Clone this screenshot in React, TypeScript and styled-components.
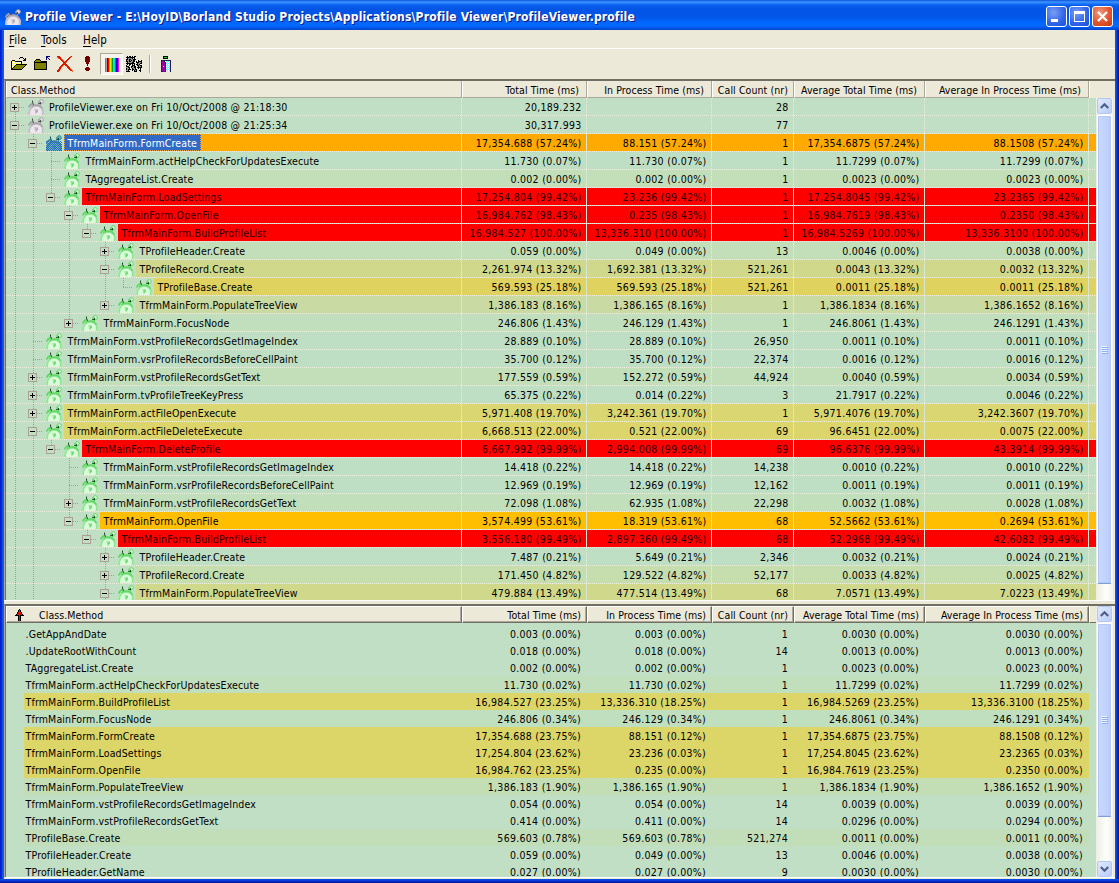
import React from "react";
import styled, { createGlobalStyle } from "styled-components";

const BASE = "#c0dfc4";
const FACE = "#ece9d8";
const COLS = [456, 125, 125, 82, 131, 164];

const Global = createGlobalStyle`
  html, body { margin: 0; padding: 0; background: #0a3fd0; overflow: hidden; }
  * { box-sizing: border-box; }
`;

const Window = styled.div`
  width: 1119px;
  height: 883px;
  display: flex;
  flex-direction: column;
  font-family: "DejaVu Sans Condensed", "DejaVu Sans", sans-serif;
  font-size: 10.5px;
  color: #000;
  white-space: pre;
  overflow: hidden;
  background: linear-gradient(90deg, #0019cf 0, #0831d9 2px, #166aee 3px, #0855dd 4px, #0855dd 1115px, #0a4fe8 1116px, #0033c8 1117px, #00138c 1119px);
`;

const TitleBar = styled.div`
  height: 30px;
  flex: none;
  display: flex;
  align-items: center;
  padding: 3px 6px 0 5px;
  background: linear-gradient(#0a52d8 0, #3d95ff 2px, #2a82fb 3px, #0a60ee 5px, #0255e5 9px, #0256e8 17px, #0266fc 22px, #0269ff 26px, #0054e3 28px, #0044d0 30px);
`;

const TitleText = styled.div`
  flex: 1;
  margin-left: 4px;
  font-family: "DejaVu Sans Condensed", sans-serif;
  font-weight: bold;
  font-size: 12px;
  letter-spacing: 0.155px;
  line-height: 20px;
  color: #fff;
  text-shadow: 1px 1px 0 #0a1883;
`;

const CaptionButton = styled.div<{ $close?: boolean }>`
  width: 21px;
  height: 21px;
  margin-left: 2px;
  border: 1px solid #fff;
  border-radius: 3px;
  background: ${(p) =>
    p.$close
      ? "radial-gradient(circle at 35% 30%, #ee9a80, #e2552e 55%, #c43a10)"
      : "radial-gradient(circle at 35% 30%, #7a9ff5, #2f63e8 60%, #1a4fd8)"};
  svg { display: block; }
`;

const Client = styled.div`
  flex: 1;
  min-height: 0;
  margin: 0 4px;
  display: flex;
  flex-direction: column;
  background: ${FACE};
`;

const BottomEdge = styled.div`
  height: 4px;
  flex: none;
  background: linear-gradient(#0855e8, #0831d9 50%, #00138c);
`;

const MenuBar = styled.div`
  height: 19px;
  flex: none;
  display: flex;
  padding: 2px 0 0 5px;
  border-bottom: 1px solid #fff;
  font-size: 11.5px;
  line-height: 16px;
`;

const MenuItem = styled.div<{ $w: number }>`
  width: ${(p) => p.$w}px;
  letter-spacing: 0.1px;
  u { text-underline-offset: 2px; }
`;

const ToolBar = styled.div`
  height: 30px;
  flex: none;
  display: flex;
  align-items: flex-start;
  padding: 4px 0 0 4px;
`;

const ToolButton = styled.div<{ $down?: boolean }>`
  width: 23px;
  height: 22px;
  padding: 3px;
  ${(p) =>
    p.$down &&
    "padding: 2px; border: 1px solid; border-color: #aca899 #fff #fff #aca899; background: #f6f4ec;"}
  svg { display: block; }
`;

const ToolSeparator = styled.div`
  width: 8px;
  height: 18px;
  margin-top: 2px;
  background: linear-gradient(90deg, transparent 3px, #aca899 3px 4px, #fff 4px 5px, transparent 5px);
`;

const TopPane = styled.div`
  height: 521px;
  flex: none;
  display: flex;
  flex-direction: column;
  border-top: 2px solid #716f64;
  border-left: 1px solid #aca899;
  overflow: hidden;
`;

const BottomPane = styled.div`
  height: 274px;
  flex: none;
  display: flex;
  border-top: 2px solid #716f64;
  border-left: 1px solid #aca899;
  border-bottom: 1px solid #fff;
  overflow: hidden;
`;

const Splitter = styled.div`
  height: 4px;
  flex: none;
  border-top: 1px solid #fff;
`;

const PaneBody = styled.div`
  flex: 1;
  min-height: 0;
  display: flex;
`;

const Header = styled.div`
  height: 17px;
  flex: none;
  display: flex;
  border-left: 1px solid #716f64;
  background: ${FACE};
`;

const HeaderCell = styled.div<{ $w: number; $right?: boolean; $pad?: number; $raised?: boolean }>`
  width: ${(p) => p.$w}px;
  flex: none;
  display: flex;
  align-items: center;
  justify-content: ${(p) => (p.$right ? "flex-end" : "flex-start")};
  padding: ${(p) => (p.$raised ? "0" : "1px")} ${(p) => p.$pad ?? 8}px 0 ${(p) => (p.$right ? 0 : 4)}px;
  letter-spacing: 0.08px;
  border-left: 1px solid #fff;
  border-right: 1px solid ${(p) => (p.$raised ? "#716f64" : "#aca899")};
  border-bottom: 1px solid ${(p) => (p.$raised ? "#716f64" : "#aca899")};
  border-top: ${(p) => (p.$raised ? "1px solid #fff" : "0")};
  box-shadow: ${(p) => (p.$raised ? "inset -1px -1px 0 #aca899" : "none")};
  svg { margin: 0 10px 0 4px; }
`;

const HeaderRest = styled.div<{ $raised?: boolean }>`
  flex: 1;
  border-left: 1px solid #fff;
  border-bottom: ${(p) => (p.$raised ? "1px solid #716f64" : "0")};
`;

const Rows = styled.div`
  width: 1091px;
  flex: none;
  overflow: hidden;
  border-left: 1px solid #716f64;
  background: ${BASE};
`;

const TreeRow = styled.div`
  height: 18px;
  display: flex;
  background: repeating-linear-gradient(90deg, #eeeedd 0 1px, transparent 1px 2px) 0 17px / 100% 1px no-repeat;
`;

const Cell = styled.div<{ $w: number }>`
  width: ${(p) => p.$w}px;
  height: 18px;
  flex: none;
  display: flex;
  padding: 0 1px 1px 0;
  background: repeating-linear-gradient(#eeeedd 0 1px, transparent 1px 2px) right 0 top 0 / 1px 100% no-repeat;
`;

const Fill = styled.div<{ $bg: string; $right?: boolean; $red?: boolean; $root?: boolean }>`
  flex: 1;
  height: 17px;
  background: ${(p) => p.$bg};
  padding: 0 ${(p) => (p.$right ? 4.5 : 0)}px 0 ${(p) => (p.$right ? 0 : p.$root ? 3 : 3.6)}px;
  text-align: ${(p) => (p.$right ? "right" : "left")};
  letter-spacing: ${(p) => (p.$right ? 0.28 : p.$root ? 0.21 : 0.13)}px;
  line-height: 18px;
  color: ${(p) => (p.$red ? "#300000" : "#000")};
`;

const Tail = styled.div<{ $bg: string }>`
  flex: 1;
  height: 17px;
  background: ${(p) => p.$bg};
`;

const Selected = styled.span`
  display: block;
  width: 137px;
  height: 17px;
  margin-left: -3.6px;
  padding-left: 2.6px;
  border: 1px dotted #e0a040;
  line-height: 16px;
  background: #316ac5;
  color: #fff;
`;

const guideDots = "#a39f94";
const V = `repeating-linear-gradient(${guideDots} 0 1px, transparent 1px 2px)`;
const H = `repeating-linear-gradient(90deg, ${guideDots} 0 1px, transparent 1px 2px)`;

const Guide = styled.div<{ $top?: boolean; $bottom?: boolean; $arm?: boolean }>`
  width: 18px;
  height: 18px;
  flex: none;
  padding: 5px 0 0 4px;
  background-repeat: no-repeat;
  background-image: ${V}, ${V}, ${H};
  background-position: 9px 0, 9px 10px, 9px 9px;
  background-size: 1px ${(p) => (p.$top ? 10 : 0)}px, 1px ${(p) => (p.$bottom ? 8 : 0)}px, ${(p) => (p.$arm ? 9 : 0)}px 1px;
`;

const Toggle = styled.div`
  width: 9px;
  height: 9px;
  border: 1px solid #aca093;
  background: ${BASE};
  svg { display: block; }
`;

const IconSlot = styled.div`
  width: 22px;
  height: 17px;
  flex: none;
  padding: 1px 0 0 4px;
  svg { display: block; }
`;

const ListRow = styled.div`
  height: 17px;
  display: flex;
`;

const ListCell = styled.div<{ $w: number; $bg: string; $name?: boolean }>`
  width: ${(p) => (p.$name ? p.$w - 18 : p.$w)}px;
  margin-left: ${(p) => (p.$name ? 18 : 0)}px;
  flex: none;
  line-height: 18px;
  background: ${(p) => p.$bg};
  text-align: ${(p) => (p.$name ? "left" : "right")};
  padding: 0 6px 0 ${(p) => (p.$name ? 1.6 : 0)}px;
  letter-spacing: ${(p) => (p.$name ? 0.13 : 0.28)}px;
`;

const ListColumn = styled.div`
  width: 1091px;
  flex: none;
  overflow: hidden;
`;

const ListBody = styled(Rows)`
  height: 254px;
  padding-top: 2px;
`;

const ScrollTrack = styled.div<{ $top?: number }>`
  width: 17px;
  flex: none;
  display: flex;
  flex-direction: column;
  padding: ${(p) => p.$top ?? 0}px 1px 0 1px;
  background: linear-gradient(90deg, #eeede5, #fefefb 60%, #f3f1ec);
`;

const ScrollButton = styled.div`
  height: 16px;
  flex: none;
  border: 1px solid #b4c8f6;
  border-radius: 2px;
  background: linear-gradient(135deg, #e1eafe, #b9cdfa);
  svg { display: block; }
`;

const Thumb = styled.div<{ $h: number }>`
  height: ${(p) => p.$h}px;
  margin-top: 1px;
  flex: none;
  display: flex;
  align-items: center;
  justify-content: center;
  border: 1px solid #fff;
  border-bottom-color: #7d9fd8;
  border-radius: 2px;
  box-shadow: inset 0 0 0 1px #b4c8f6;
  background: linear-gradient(90deg, #c9d9fd, #c1d3fd 60%, #b8cbf6);
`;

const Spacer = styled.div`flex: 1;`;

/* ---------- pixel icons ---------- */

const PAL: Record<string, string> = {
  K: "#000000", W: "#ffffff", Y: "#ffff60", O: "#808000", B: "#000080", R: "#d81800",
  r: "#f87040", M: "#700000", G: "#909090", g: "#404040", P: "#a000a0", C: "#60f0f0",
  N: "#20d020", V: "#202060",
};

function Pixels({ map, w = 16, h = 16 }: { map: string[]; w?: number; h?: number }) {
  const out: React.ReactElement[] = [];
  map.forEach((line, y) => {
    let x = 0;
    while (x < line.length) {
      const c = line[x];
      let n = 1;
      while (line[x + n] === c) n++;
      if (PAL[c]) out.push(<rect key={`${x}-${y}`} x={x} y={y} width={n} height={1} fill={PAL[c]} />);
      x += n;
    }
  });
  return <svg width={w} height={h} shapeRendering="crispEdges">{out}</svg>;
}

const OPEN = [
  "",
  ".........KKK....",
  "........K...K.K.",
  ".............KK.",
  ".KKK........KKK.",
  "KYWYKKKKKKK.....",
  "KWYWYWYWYWK.....",
  "KYWYWYWYWYK.....",
  "KWYWYKKKKKKKKKKK",
  "KYWYKOOOOOOOOOK.",
  "KWYKOOOOOOOOOK..",
  "KYKOOOOOOOOOK...",
  "KKOOOOOOOOOK....",
  "KKKKKKKKKKK.....",
];
const CLOSE = [
  "............BBBB",
  "............BB..",
  "............B.B.",
  "..KKKK......B..B",
  ".KOOOOK.........",
  "KOOOOOOKKKKKK...",
  "KKKKKKKKKKKKK...",
  "KOOOOOOOOOOOK...",
  "KOOOOOOOOOOOK...",
  "KOOOOOOOOOOOK...",
  "KOOOOOOOOOOOK...",
  "KOOOOOOOOOOOK...",
  "KOOOOOOOOOOOK...",
  "KKKKKKKKKKKKK...",
];
const DELETE = [
  "RRR..........rR.",
  "rRRR........RR..",
  ".rRRr......RR...",
  "...RRr....RR....",
  "....RRr..RR.....",
  ".....RRrRR......",
  "......RRRr......",
  "......RRR.......",
  ".....RRRRR......",
  "....RRr.RRR.....",
  "...RRr...rRR....",
  "..RRr.....RRR...",
  "..RR.......RRr..",
  ".RRr........RRr.",
  "RRR..........RRr",
  "RR.............r",
];
const BANG = [
  "......MMM.......",
  ".....MMMMM......",
  ".....MMMMM......",
  ".....MMMMM......",
  ".....MMMMM......",
  ".....MMMMM......",
  "......MMM.......",
  "......MMM.......",
  ".......M........",
  ".......M........",
  "................",
  "......MMM.......",
  ".....MMMMM......",
  ".....MMMMM......",
  "......MMM.......",
];
const GEARS = [
  ".K.KK.K.KK......",
  "KKKKKKKKK.......",
  ".KGGGGK.K.......",
  "KKGKKGGKKK......",
  "KGGKGKGKK...K..K",
  "KKGKKGGKK.K.KKKK",
  ".KGGGGKK..KKKGGK",
  "KKKKKKKKK..KGGKK",
  ".K.KK.K.K.KKGK..",
  "K..K..KKK..KKGKK",
  "KKK..KKGKK..KGGK",
  "GGKK.KGGKK.KKKKK",
  "KGGK..KGGK..K.K.",
  "KGKKK.KKGKK...K.",
  "GGK...K.KGK..KK.",
  "KKKK....KKK...K.",
];
const EXIT = [
  "......KKKKK.....",
  "......KNNNK.....",
  "......KKKKK.....",
  "................",
  "....VVVVVVVVVV..",
  "....VPPKWCWCWV..",
  "....VPPPVWCWCV..",
  "....VPPPVCWCWV..",
  "....VPPPVWCWCV..",
  "....VPPPVCWCWV..",
  "....VPWPVWCWCV..",
  "....VPPPVCWCWV..",
  "....VPPPVWCWCV..",
  "....VPPPVCWCWV..",
  "....VPPPVWCWCV..",
  "....VVPPV....V..",
];
const SORT = [
  "....K....",
  "...KRK...",
  "...KRK...",
  "..KRRRK..",
  "..KRRRK..",
  ".KRRRRRK.",
  "KKKKRKKKK",
  "...KRK...",
  "...KRK...",
  "...KRK...",
  "...KRK...",
  "...KRK...",
];

const STRIPES = ["#808080", "#a0a0a0", "#900000", "#ff0000", "#ff9000", "#ffff00", "#a0c000", "#00a000", "#00ff80", "#00e0e0", "#0060ff", "#0000c0", "#4000ff", "#ff00ff"];

function Clock({ tone }: { tone: "gray" | "green" | "selected" }) {
  const [rim, body, mid, dark] =
    tone === "gray"
      ? ["#a8a2aa", "#ebe7ec", "#c5bfca", "#48444c"]
      : tone === "green"
        ? ["#5fd863", "#dcfbdc", "#8fe992", "#104a18"]
        : ["#2f8f9c", "#68b8b8", "#3b9aa0", "#0c4550"];
  return (
    <svg width="16" height="16" viewBox="0 0 16 16">
      <path d="M0.6 16 C-.3 10 3 6 8 6 C13 6 16.4 10 15.4 16Z" fill={body} />
      <path d="M1.3 16 C.4 11 3.4 7 8 6.8 C11.4 6.8 13.6 8.4 14.7 11 Q15 13 14.6 16" fill="none" stroke={mid} strokeWidth="2" />
      <path d="M3 7.6 Q6 5.6 9 6 Q12.6 6.6 14.6 9.6" fill="none" stroke={rim} strokeWidth="1.4" />
      <path d="M0.8 8.6 Q1.6 5.2 5 4.6" fill="none" stroke={rim} strokeWidth="1.6" />
      <circle cx="13.3" cy="2.7" r="2" fill={body} stroke={rim} strokeWidth="1" />
      <path d="M10.8 2V5.5M13 4.5L12 7" stroke={rim} strokeWidth="1" />
      <path d="M4.5 1.6V3.2L5.6 5.8M10.3 4.6H13M12.6 4.6V2.8" stroke={dark} strokeWidth="1" fill="none" />
      <path d="M6.4 11H9.2V12.6H8V14.4" stroke={rim} strokeWidth="1.2" fill="none" />
      {tone === "selected" && (
        <g fill="#316ac5" shapeRendering="crispEdges">
          {Array.from({ length: 80 }, (_, i) => {
            const y = 6 + Math.floor(i / 8);
            return <rect key={i} x={(i % 8) * 2 + (y % 2)} y={y} width="1" height="1" />;
          })}
        </g>
      )}
    </svg>
  );
}

function Arrow({ down }: { down?: boolean }) {
  return (
    <svg width="13" height="14" viewBox="0 0 13 14">
      <path d={down ? "M2.8 5L6.5 8.7L10.2 5" : "M2.8 9L6.5 5.3L10.2 9"} fill="none" stroke="#4d6185" strokeWidth="2.2" />
    </svg>
  );
}

function Grip() {
  return (
    <svg width="7" height="8" shapeRendering="crispEdges">
      {[0, 2, 4, 6].map((y) => (
        <g key={y}>
          <rect x="0" y={y} width="6" height="1" fill="#eef4fe" />
          <rect x="1" y={y + 1} width="6" height="1" fill="#8cb0f8" />
        </g>
      ))}
    </svg>
  );
}

/* ---------- data ---------- */

type Node = { l: number; s: "" | "+" | "-"; n: string; v: string[]; c: string };
const F = "TfrmMainForm.";
const RED = "#ff0000";
const G0 = "#bfdfc4";
const G1 = "#c2dfba";
const node = (l: number, s: "" | "+" | "-", n: string, c: string, vals: string): Node => ({ l, s, n, c, v: vals.split("|") });

const TREE: Node[] = [
  node(0, "+", "ProfileViewer.exe on Fri 10/Oct/2008 @ 21:18:30", BASE, "20,189.232||28||"),
  node(0, "-", "ProfileViewer.exe on Fri 10/Oct/2008 @ 21:25:34", BASE, "30,317.993||77||"),
  node(1, "-", F + "FormCreate", "#ffaa00", "17,354.688 (57.24%)|88.151 (57.24%)|1|17,354.6875 (57.24%)|88.1508 (57.24%)"),
  node(2, "", F + "actHelpCheckForUpdatesExecute", G0, "11.730 (0.07%)|11.730 (0.07%)|1|11.7299 (0.07%)|11.7299 (0.07%)"),
  node(2, "", "TAggregateList.Create", G1, "0.002 (0.00%)|0.002 (0.00%)|1|0.0023 (0.00%)|0.0023 (0.00%)"),
  node(2, "-", F + "LoadSettings", RED, "17,254.804 (99.42%)|23.236 (99.42%)|1|17,254.8045 (99.42%)|23.2365 (99.42%)"),
  node(3, "-", F + "OpenFile", RED, "16,984.762 (98.43%)|0.235 (98.43%)|1|16,984.7619 (98.43%)|0.2350 (98.43%)"),
  node(4, "-", F + "BuildProfileList", RED, "16,984.527 (100.00%)|13,336.310 (100.00%)|1|16,984.5269 (100.00%)|13,336.3100 (100.00%)"),
  node(5, "+", "TProfileHeader.Create", G1, "0.059 (0.00%)|0.049 (0.00%)|13|0.0046 (0.00%)|0.0038 (0.00%)"),
  node(5, "-", "TProfileRecord.Create", "#d0d98b", "2,261.974 (13.32%)|1,692.381 (13.32%)|521,261|0.0043 (13.32%)|0.0032 (13.32%)"),
  node(6, "", "TProfileBase.Create", "#e0d25e", "569.593 (25.18%)|569.593 (25.18%)|521,261|0.0011 (25.18%)|0.0011 (25.18%)"),
  node(5, "+", F + "PopulateTreeView", "#c9dba2", "1,386.183 (8.16%)|1,386.165 (8.16%)|1|1,386.1834 (8.16%)|1,386.1652 (8.16%)"),
  node(3, "+", F + "FocusNode", "#c1dfbd", "246.806 (1.43%)|246.129 (1.43%)|1|246.8061 (1.43%)|246.1291 (1.43%)"),
  node(1, "", F + "vstProfileRecordsGetImageIndex", G0, "28.889 (0.10%)|28.889 (0.10%)|26,950|0.0011 (0.10%)|0.0011 (0.10%)"),
  node(1, "", F + "vsrProfileRecordsBeforeCellPaint", G0, "35.700 (0.12%)|35.700 (0.12%)|22,374|0.0016 (0.12%)|0.0016 (0.12%)"),
  node(1, "+", F + "vstProfileRecordsGetText", G1, "177.559 (0.59%)|152.272 (0.59%)|44,924|0.0040 (0.59%)|0.0034 (0.59%)"),
  node(1, "+", F + "tvProfileTreeKeyPress", G0, "65.375 (0.22%)|0.014 (0.22%)|3|21.7917 (0.22%)|0.0046 (0.22%)"),
  node(1, "+", F + "actFileOpenExecute", "#dad672", "5,971.408 (19.70%)|3,242.361 (19.70%)|1|5,971.4076 (19.70%)|3,242.3607 (19.70%)"),
  node(1, "-", F + "actFileDeleteExecute", "#dcd56b", "6,668.513 (22.00%)|0.521 (22.00%)|69|96.6451 (22.00%)|0.0075 (22.00%)"),
  node(2, "-", F + "DeleteProfile", RED, "6,667.992 (99.99%)|2,994.008 (99.99%)|69|96.6376 (99.99%)|43.3914 (99.99%)"),
  node(3, "", F + "vstProfileRecordsGetImageIndex", G0, "14.418 (0.22%)|14.418 (0.22%)|14,238|0.0010 (0.22%)|0.0010 (0.22%)"),
  node(3, "", F + "vsrProfileRecordsBeforeCellPaint", G0, "12.969 (0.19%)|12.969 (0.19%)|12,162|0.0011 (0.19%)|0.0011 (0.19%)"),
  node(3, "+", F + "vstProfileRecordsGetText", "#c2dfbc", "72.098 (1.08%)|62.935 (1.08%)|22,298|0.0032 (1.08%)|0.0028 (1.08%)"),
  node(3, "-", F + "OpenFile", "#ffbe00", "3,574.499 (53.61%)|18.319 (53.61%)|68|52.5662 (53.61%)|0.2694 (53.61%)"),
  node(4, "-", F + "BuildProfileList", RED, "3,556.180 (99.49%)|2,897.360 (99.49%)|68|52.2968 (99.49%)|42.6082 (99.49%)"),
  node(5, "+", "TProfileHeader.Create", G0, "7.487 (0.21%)|5.649 (0.21%)|2,346|0.0032 (0.21%)|0.0024 (0.21%)"),
  node(5, "+", "TProfileRecord.Create", "#c6ddae", "171.450 (4.82%)|129.522 (4.82%)|52,177|0.0033 (4.82%)|0.0025 (4.82%)"),
  node(5, "-", F + "PopulateTreeView", "#d0d98b", "479.884 (13.49%)|477.514 (13.49%)|68|7.0571 (13.49%)|7.0223 (13.49%)"),
];

/* Levels whose siblings carry on below the visible rows. */
const OPEN_AT_END = [0, 1, 5];

function continues(row: number, level: number) {
  for (let i = row + 1; i < TREE.length; i++) {
    if (TREE[i].l === level) return true;
    if (TREE[i].l < level) return false;
  }
  return OPEN_AT_END.includes(level);
}

const YEL = "#dcd568";
const LIST: [string, string, string][] = [
  [".GetAppAndDate", BASE, "0.003 (0.00%)|0.003 (0.00%)|1|0.0030 (0.00%)|0.0030 (0.00%)"],
  [".UpdateRootWithCount", BASE, "0.018 (0.00%)|0.018 (0.00%)|14|0.0013 (0.00%)|0.0013 (0.00%)"],
  ["TAggregateList.Create", BASE, "0.002 (0.00%)|0.002 (0.00%)|1|0.0023 (0.00%)|0.0023 (0.00%)"],
  [F + "actHelpCheckForUpdatesExecute", "#c1dfbd", "11.730 (0.02%)|11.730 (0.02%)|1|11.7299 (0.02%)|11.7299 (0.02%)"],
  [F + "BuildProfileList", YEL, "16,984.527 (23.25%)|13,336.310 (18.25%)|1|16,984.5269 (23.25%)|13,336.3100 (18.25%)"],
  [F + "FocusNode", "#c0dfbf", "246.806 (0.34%)|246.129 (0.34%)|1|246.8061 (0.34%)|246.1291 (0.34%)"],
  [F + "FormCreate", YEL, "17,354.688 (23.75%)|88.151 (0.12%)|1|17,354.6875 (23.75%)|88.1508 (0.12%)"],
  [F + "LoadSettings", YEL, "17,254.804 (23.62%)|23.236 (0.03%)|1|17,254.8045 (23.62%)|23.2365 (0.03%)"],
  [F + "OpenFile", YEL, "16,984.762 (23.25%)|0.235 (0.00%)|1|16,984.7619 (23.25%)|0.2350 (0.00%)"],
  [F + "PopulateTreeView", "#c3deb4", "1,386.183 (1.90%)|1,386.165 (1.90%)|1|1,386.1834 (1.90%)|1,386.1652 (1.90%)"],
  [F + "vstProfileRecordsGetImageIndex", BASE, "0.054 (0.00%)|0.054 (0.00%)|14|0.0039 (0.00%)|0.0039 (0.00%)"],
  [F + "vstProfileRecordsGetText", BASE, "0.414 (0.00%)|0.411 (0.00%)|14|0.0296 (0.00%)|0.0294 (0.00%)"],
  ["TProfileBase.Create", "#c1deb9", "569.603 (0.78%)|569.603 (0.78%)|521,274|0.0011 (0.00%)|0.0011 (0.00%)"],
  ["TProfileHeader.Create", BASE, "0.059 (0.00%)|0.049 (0.00%)|13|0.0046 (0.00%)|0.0038 (0.00%)"],
  ["TProfileHeader.GetName", BASE, "0.027 (0.00%)|0.027 (0.00%)|9|0.0030 (0.00%)|0.0030 (0.00%)"],
];

const TITLES = ["Total Time (ms)", "In Process Time (ms)", "Call Count (nr)", "Average Total Time (ms)", "Average In Process Time (ms)"];

function TreeLine({ item, row }: { item: Node; row: number }) {
  const red = item.c === RED;
  return (
    <TreeRow>
      <Cell $w={COLS[0]}>
        {Array.from({ length: item.l + 1 }, (_, k) => {
          const own = k === item.l;
          const more = continues(row, k);
          return (
            <Guide key={k} $top={own ? row > 0 : more} $bottom={more} $arm={own}>
              {own && item.s && (
                <Toggle>
                  <svg width="7" height="7" shapeRendering="crispEdges">
                    <rect x="1" y="3" width="5" height="1" />
                    {item.s === "+" && <rect x="3" y="1" width="1" height="5" />}
                  </svg>
                </Toggle>
              )}
            </Guide>
          );
        })}
        <IconSlot>
          <Clock tone={item.l === 0 ? "gray" : row === 2 ? "selected" : "green"} />
        </IconSlot>
        <Fill $bg={item.c} $red={red} $root={item.l === 0}>
          {row === 2 ? <Selected>{item.n}</Selected> : item.n}
        </Fill>
      </Cell>
      {item.v.map((v, i) => (
        <Cell key={i} $w={COLS[i + 1]}>
          <Fill $bg={item.c} $right $red={red}>{v}</Fill>
        </Cell>
      ))}
      <Tail $bg={item.c} />
    </TreeRow>
  );
}

export default function App() {
  return (
    <Window>
      <Global />
      <TitleBar>
        <Clock tone="gray" />
        <TitleText>{"Profile Viewer - E:\\HoyID\\Borland Studio Projects\\Applications\\Profile Viewer\\ProfileViewer.profile"}</TitleText>
        <CaptionButton>
          <svg width="19" height="19"><rect x="4" y="12" width="7" height="3" fill="#fff" /></svg>
        </CaptionButton>
        <CaptionButton>
          <svg width="19" height="19" shapeRendering="crispEdges">
            <path d="M4 4H15V15H4ZM5 7V14H14V7Z" fill="#fff" fillRule="evenodd" />
          </svg>
        </CaptionButton>
        <CaptionButton $close>
          <svg width="19" height="19"><path d="M5 5L14 14M14 5L5 14" stroke="#fff" strokeWidth="2.2" /></svg>
        </CaptionButton>
      </TitleBar>
      <Client>
        <MenuBar>
          <MenuItem $w={32}><u>F</u>ile</MenuItem>
          <MenuItem $w={42}><u>T</u>ools</MenuItem>
          <MenuItem $w={40}><u>H</u>elp</MenuItem>
        </MenuBar>
        <ToolBar>
          <ToolButton><Pixels map={OPEN} /></ToolButton>
          <ToolButton><Pixels map={CLOSE} /></ToolButton>
          <ToolButton><Pixels map={DELETE} /></ToolButton>
          <ToolButton><Pixels map={BANG} /></ToolButton>
          <ToolButton $down>
            <svg width="17" height="17" shapeRendering="crispEdges">
              {STRIPES.map((c, i) => <rect key={i} x={2 + i} y="2" width="1" height="14" fill={c} />)}
            </svg>
          </ToolButton>
          <ToolButton><Pixels map={GEARS} /></ToolButton>
          <ToolSeparator />
          <ToolButton><Pixels map={EXIT} /></ToolButton>
        </ToolBar>
        <TopPane>
          <Header>
            <HeaderCell $w={COLS[0]}>Class.Method</HeaderCell>
            {TITLES.map((t, i) => (
              <HeaderCell key={t} $w={COLS[i + 1]} $right $pad={i === 2 ? 5 : 7}>{t}</HeaderCell>
            ))}
            <HeaderRest />
          </Header>
          <PaneBody>
            <Rows>
              {TREE.map((item, i) => <TreeLine key={i} item={item} row={i} />)}
            </Rows>
            <ScrollTrack>
              <ScrollButton><Arrow /></ScrollButton>
              <Thumb $h={469}><Grip /></Thumb>
            </ScrollTrack>
          </PaneBody>
        </TopPane>
        <Splitter />
        <BottomPane>
          <ListColumn>
            <Header>
              <HeaderCell $w={COLS[0]} $raised>
                <Pixels map={SORT} w={14} h={12} />Class.Method
              </HeaderCell>
              {TITLES.map((t, i) => (
                <HeaderCell key={t} $w={COLS[i + 1]} $right $pad={5} $raised>{t}</HeaderCell>
              ))}
              <HeaderRest $raised />
            </Header>
            <ListBody>
              {LIST.map(([name, bg, vals], r) => (
                <ListRow key={r}>
                  <ListCell $w={COLS[0]} $bg={bg} $name>{name}</ListCell>
                  {vals.split("|").map((v, i) => (
                    <ListCell key={i} $w={COLS[i + 1]} $bg={bg}>{v}</ListCell>
                  ))}
                </ListRow>
              ))}
            </ListBody>
          </ListColumn>
          <ScrollTrack>
            <ScrollButton><Arrow /></ScrollButton>
            <Thumb $h={194}><Grip /></Thumb>
            <Spacer />
            <ScrollButton><Arrow down /></ScrollButton>
          </ScrollTrack>
        </BottomPane>
      </Client>
      <BottomEdge />
    </Window>
  );
}
